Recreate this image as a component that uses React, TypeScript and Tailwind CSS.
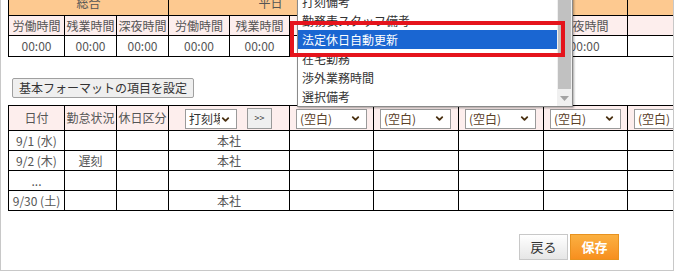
import { ChevronDown } from 'lucide-react';

const topCols = [56, 52, 52, 61, 60, 83, 84, 85, 86, 60];
const topSub = ['労働時間', '残業時間', '深夜時間', '労働時間', '残業時間', '深夜時間', '労働時間', '残業時間', '深夜時間', ''];

const bottomCols = [56, 52, 52, 121, 84, 85, 85, 84, 60];

const rows = [
  { date: '9/1 (水)', status: '', place: '本社' },
  { date: '9/2 (木)', status: '遅刻', place: '本社' },
  { date: '...', status: '', place: '' },
  { date: '9/30 (土)', status: '', place: '本社' },
];

const menuItems = ['打刻備考', '勤務表スタッフ備考', '法定休日自動更新', '在宅勤務', '渉外業務時間', '選択備考'];

// select box look-alike (native selects render differently per browser)
function FakeSelect({ label, className }: { label: string; className: string }) {
  return (
    <div
      className={`flex items-center justify-between h-[20px] border border-[#9a9a9a] bg-white pl-[3px] pr-[5px] text-[12px] leading-[18px] text-[#5a4028] ${className}`}
    >
      <span className="overflow-hidden whitespace-nowrap">{label}</span>
      <ChevronDown className="w-[11px] h-[11px] shrink-0 text-[#4a3010]" strokeWidth={4} />
    </div>
  );
}

export default function App() {
  return (
    <div className="relative w-[674px] h-[271px] overflow-hidden border-x border-b border-[#c8c8c8] bg-white pl-[7px] font-['Noto_Sans_CJK_JP',sans-serif] text-[12px] text-[#555]">
      {/* Summary table */}
      <table className="table-fixed border-collapse w-[679px] mt-[-10px]">
        <colgroup>
          {topCols.map((w, i) => (
            <col key={i} style={{ width: w }} />
          ))}
        </colgroup>
        <tbody>
          <tr className="h-[25px] bg-[#fdc990]">
            <td colSpan={3} className="border border-black p-0 text-center leading-[14px] align-top pt-[5px]">総合</td>
            <td colSpan={3} className="border border-black p-0 text-center leading-[14px] align-top pt-[5px]">平日</td>
            <td colSpan={3} className="border border-black p-0 text-center leading-[14px] align-top pt-[5px]">休日</td>
            <td className="border border-black p-0"></td>
          </tr>
          <tr className="h-[20px] bg-[#fdeeed]">
            {topSub.map((t, i) => (
              <td key={i} className="border border-black p-0 text-center leading-[18px] whitespace-nowrap">{t}</td>
            ))}
          </tr>
          <tr className="h-[21px] bg-white">
            {topSub.map((t, i) => (
              <td key={i} className="border border-black p-0 text-center leading-[18px]">{t ? '00:00' : ''}</td>
            ))}
          </tr>
        </tbody>
      </table>

      <button className="mt-[21px] ml-[4px] h-[20px] px-[6px] border border-[#a0a0a0] bg-[#efefef] rounded-[2px] text-[12px] leading-[18px] text-[#333]">
        基本フォーマットの項目を設定
      </button>

      {/* Detail table */}
      <table className="table-fixed border-collapse w-[679px] mt-[7px]">
        <colgroup>
          {bottomCols.map((w, i) => (
            <col key={i} style={{ width: w }} />
          ))}
        </colgroup>
        <tbody>
          <tr className="h-[25px] bg-[#fdeeed]">
            <td className="border border-black p-0 text-center whitespace-nowrap">日付</td>
            <td className="border border-black p-0 text-center whitespace-nowrap">勤怠状況</td>
            <td className="border border-black p-0 text-center whitespace-nowrap">休日区分</td>
            <td className="border border-black p-0">
              <div className="flex items-center">
                <FakeSelect label="打刻場所" className="ml-[16px] w-[52px] mt-[2px] text-[#333]" />
                <span className="ml-[10px] flex h-[21px] w-[25px] items-center justify-center border border-[#999] bg-[#efefef] text-[9px] text-[#333]">&gt;&gt;</span>
              </div>
            </td>
            {[0, 1, 2, 3, 4].map((i) => (
              <td key={i} className="border border-black p-0">
                <FakeSelect label="(空白)" className="ml-[6px] w-[71px] mt-[1px]" />
              </td>
            ))}
          </tr>
          {rows.map((r, i) => (
            <tr key={i} className="h-[20px]">
              <td className="border border-black p-0 text-center leading-[18px] whitespace-nowrap">{r.date}</td>
              <td className="border border-black p-0 text-center leading-[18px]">{r.status}</td>
              <td className="border border-black p-0"></td>
              <td className="border border-black p-0 text-center leading-[18px]">{r.place}</td>
              {[0, 1, 2, 3, 4].map((j) => (
                <td key={j} className="border border-black p-0"></td>
              ))}
            </tr>
          ))}
        </tbody>
      </table>

      <div className="mt-[23px] flex justify-end gap-[2px] pr-[54px]">
        <button className="h-[26px] w-[49px] border border-[#c8c8c8] bg-gradient-to-b from-white to-[#e6e6e6] text-[13px] text-[#333]">
          戻る
        </button>
        <button className="h-[26px] w-[49px] border border-[#e8921f] bg-gradient-to-b from-[#fbb040] to-[#f78f1e] text-[13px] font-bold text-white">
          保存
        </button>
      </div>

      {/* Open dropdown list */}
      <div className="absolute left-[296px] top-[-9px] flex w-[276px] border border-[#8a8a8a] bg-white shadow-[1px_1px_2px_rgba(0,0,0,0.35)]">
        <ul className="flex-1 py-0 text-[12px] text-[#333]">
          {menuItems.map((m) => (
            <li
              key={m}
              className={
                m === '法定休日自動更新'
                  ? 'h-[19px] bg-[#1a66d2] pl-[4px] leading-[19px] text-white'
                  : 'h-[19px] pl-[4px] leading-[19px]'
              }
            >
              {m}
            </li>
          ))}
        </ul>
        <div className="relative w-[15px] bg-[#f0f0f0]">
          <div className="mx-[1px] h-[97px] bg-[#c1c1c1]" />
          <svg className="absolute bottom-[4px] left-[3px]" width="9" height="6" viewBox="0 0 9 6">
            <polygon points="0,0 9,0 4.5,5" fill="#a3a3a3" />
          </svg>
        </div>
      </div>

      {/* Highlight frame */}
      <div className="absolute left-[289px] top-[21px] h-[36px] w-[275px] border-[4px] border-[#e5141c]" />
    </div>
  );
}
